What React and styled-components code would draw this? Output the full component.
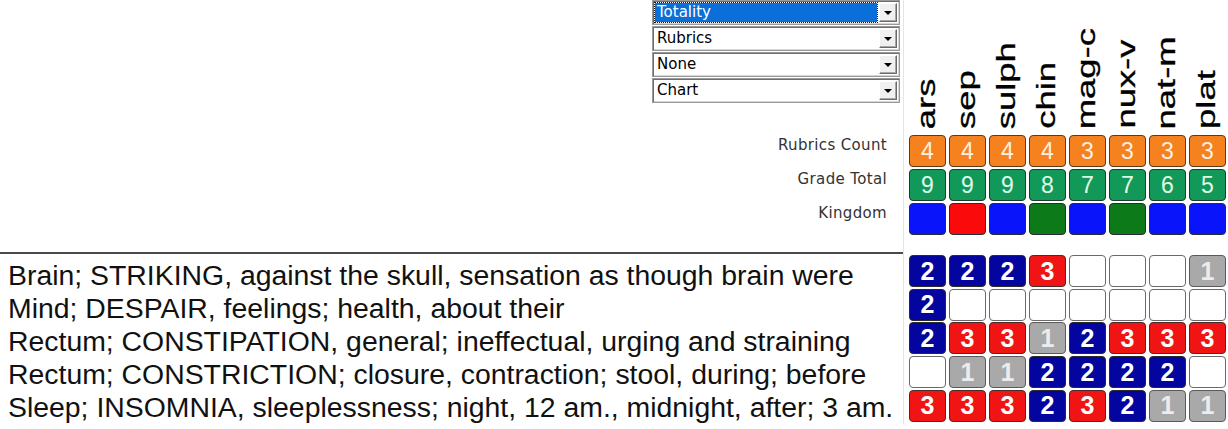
import styled, { createGlobalStyle } from "styled-components";

const GlobalStyle = createGlobalStyle`
  body {
    margin: 0;
    background: #ffffff;
    font-family: "Liberation Sans", Arial, sans-serif;
  }
`;

const Page = styled.div`
  width: 1228px;
`;

const Section = styled.div`
  display: grid;
  grid-template-columns: 903px 1fr;
  height: ${(p) => p.$height || "auto"};
`;

const ControlColumn = styled.div`
  display: flex;
  flex-direction: column;
  align-items: flex-end;
  padding: 0 3px 0 0;
`;

const SelectStack = styled.div`
  display: flex;
  flex-direction: column;
  gap: 1px;
`;

const SelectBox = styled.div`
  display: flex;
  width: 248px;
  height: 25px;
  box-sizing: border-box;
  padding: 1px;
  border: 1px solid #9a9a9a;
  box-shadow: inset 1px 1px 0 #6e6e6e, inset -1px -1px 0 #d6d6d6;
  background: #ffffff;
`;

const SelectValue = styled.div`
  flex: 1;
  margin: 1px 2px 1px 1px;
  padding-left: 2px;
  font-family: "DejaVu Sans", Verdana, sans-serif;
  font-size: 15px;
  line-height: 19px;
  color: ${(p) => (p.$active ? "#ffffff" : "#000000")};
  background: ${(p) => (p.$active ? "#0a6fd8" : "transparent")};
  outline: ${(p) => (p.$active ? "1px dotted #1a1a1a" : "none")};
`;

const ArrowButton = styled.div`
  width: 18px;
  margin: 1px 1px 1px 0;
  box-sizing: border-box;
  display: flex;
  align-items: center;
  justify-content: center;
  background: #f0f0f0;
  border: 1px solid;
  border-color: #ffffff #6a6a6a #6a6a6a #ffffff;
  box-shadow: inset -1px -1px 0 #a8a8a8;

  &::after {
    content: "";
    margin-top: 1px;
    border-left: 4px solid transparent;
    border-right: 4px solid transparent;
    border-top: 4px solid #000000;
  }
`;

const LabelList = styled.div`
  margin-top: 33px;
  padding-right: 13px;
  display: flex;
  flex-direction: column;
  align-items: flex-end;
`;

const Label = styled.div`
  height: 34px;
  font-family: "DejaVu Sans", Verdana, sans-serif;
  font-size: 15px;
  letter-spacing: 0.35px;
  line-height: 18px;
  color: #333333;
`;

const ChartColumn = styled.div`
  border-left: 1px solid #e4e4e4;
  padding: ${(p) => p.$top || 0}px 0 0 5px;
`;

const Header = styled.div`
  display: grid;
  grid-template-columns: repeat(8, 37px);
  column-gap: 3px;
  height: 129px;
  margin-bottom: 6px;
`;

const HeaderCell = styled.div`
  display: flex;
  justify-content: center;
  align-items: flex-end;
`;

const Stretch = styled.div`
  display: flex;
  transform-origin: 50% 100%;
  transform: scaleY(1.4);
  margin-right: 3px;
`;

const HeaderText = styled.span`
  writing-mode: vertical-rl;
  transform: rotate(180deg);
  font-size: 26px;
  line-height: 28px;
  color: #000000;
  white-space: nowrap;
  -webkit-text-stroke: 0.3px #000000;
`;

const CellGrid = styled.div`
  display: grid;
  grid-template-columns: repeat(8, 37px);
  grid-auto-rows: 32px;
  column-gap: 3px;
  row-gap: ${(p) => p.$rowGap}px;
`;

const Cell = styled.div`
  box-sizing: border-box;
  display: flex;
  align-items: center;
  justify-content: center;
  border: 1px solid ${(p) => p.$border || "#3c3c3c"};
  border-radius: 4px;
  background: ${(p) => p.$bg};
  color: ${(p) => p.$fg || "#ffffff"};
  font-size: ${(p) => (p.$bold ? 25 : 23)}px;
  font-weight: ${(p) => (p.$bold ? 700 : 400)};
  line-height: 1;
`;

const RubricList = styled.div`
  border-top: 2px solid #4a4a4a;
  padding: 5px 0 0 8px;
  font-size: 28.4px;
  line-height: 33px;
  color: #111111;
  white-space: nowrap;
`;

const remedies = ["ars", "sep", "sulph", "chin", "mag-c", "nux-v", "nat-m", "plat"];
const counts = [4, 4, 4, 4, 3, 3, 3, 3];
const totals = [9, 9, 9, 8, 7, 7, 6, 5];
const kingdoms = ["b", "r", "b", "g", "b", "g", "b", "b"];
const kingdomColors = { b: "#0a14fb", r: "#fa0a0a", g: "#0d7a1a" };

const grades = {
  0: { bg: "#ffffff", border: "#6a6a6a" },
  1: { bg: "#a9a9a9", border: "#5a5a5a", fg: "#ececec" },
  2: { bg: "#04049e", border: "#2a2a2a", fg: "#ffffff" },
  3: { bg: "#f01414", border: "#4a2a2a", fg: "#ffffff" },
};

const rubrics = [
  { text: "Brain; STRIKING, against the skull, sensation as though brain were", grades: [2, 2, 2, 3, 0, 0, 0, 1] },
  { text: "Mind; DESPAIR, feelings; health, about their", grades: [2, 0, 0, 0, 0, 0, 0, 0] },
  { text: "Rectum; CONSTIPATION, general; ineffectual, urging and straining", grades: [2, 3, 3, 1, 2, 3, 3, 3] },
  { text: "Rectum; CONSTRICTION; closure, contraction; stool, during; before", grades: [0, 1, 1, 2, 2, 2, 2, 0] },
  { text: "Sleep; INSOMNIA, sleeplessness; night, 12 am., midnight, after; 3 am.", grades: [3, 3, 3, 2, 3, 2, 1, 1] },
];

const selects = ["Totality", "Rubrics", "None", "Chart"];

const App = () => {
  return (
    <Page>
      <GlobalStyle />
      <Section $height="252px">
        <ControlColumn>
          <SelectStack>
            {selects.map((value, index) => (
              <SelectBox key={value}>
                <SelectValue $active={index === 0}>{value}</SelectValue>
                <ArrowButton />
              </SelectBox>
            ))}
          </SelectStack>
          <LabelList>
            <Label>Rubrics Count</Label>
            <Label>Grade Total</Label>
            <Label>Kingdom</Label>
          </LabelList>
        </ControlColumn>
        <ChartColumn>
          <Header>
            {remedies.map((name) => (
              <HeaderCell key={name}>
                <Stretch>
                  <HeaderText>{name}</HeaderText>
                </Stretch>
              </HeaderCell>
            ))}
          </Header>
          <CellGrid $rowGap={2}>
            {counts.map((n, i) => (
              <Cell key={"c" + i} $bg="#f5821f" $border="#5a3a1e" $fg="#fdf0e2">
                {n}
              </Cell>
            ))}
            {totals.map((n, i) => (
              <Cell key={"t" + i} $bg="#12995a" $border="#1f3a2a" $fg="#e2fbe6">
                {n}
              </Cell>
            ))}
            {kingdoms.map((k, i) => (
              <Cell key={"k" + i} $bg={kingdomColors[k]} $border="#2a2a3a" />
            ))}
          </CellGrid>
        </ChartColumn>
      </Section>
      <Section>
        <RubricList>
          {rubrics.map((r) => (
            <div key={r.text}>{r.text}</div>
          ))}
        </RubricList>
        <ChartColumn $top={3}>
          <CellGrid $rowGap={1.7}>
            {rubrics.map((r, row) =>
              r.grades.map((g, i) => (
                <Cell
                  key={row + "-" + i}
                  $bold
                  $bg={grades[g].bg}
                  $border={grades[g].border}
                  $fg={grades[g].fg}
                >
                  {g > 0 ? g : ""}
                </Cell>
              ))
            )}
          </CellGrid>
        </ChartColumn>
      </Section>
    </Page>
  );
};

export default App;
